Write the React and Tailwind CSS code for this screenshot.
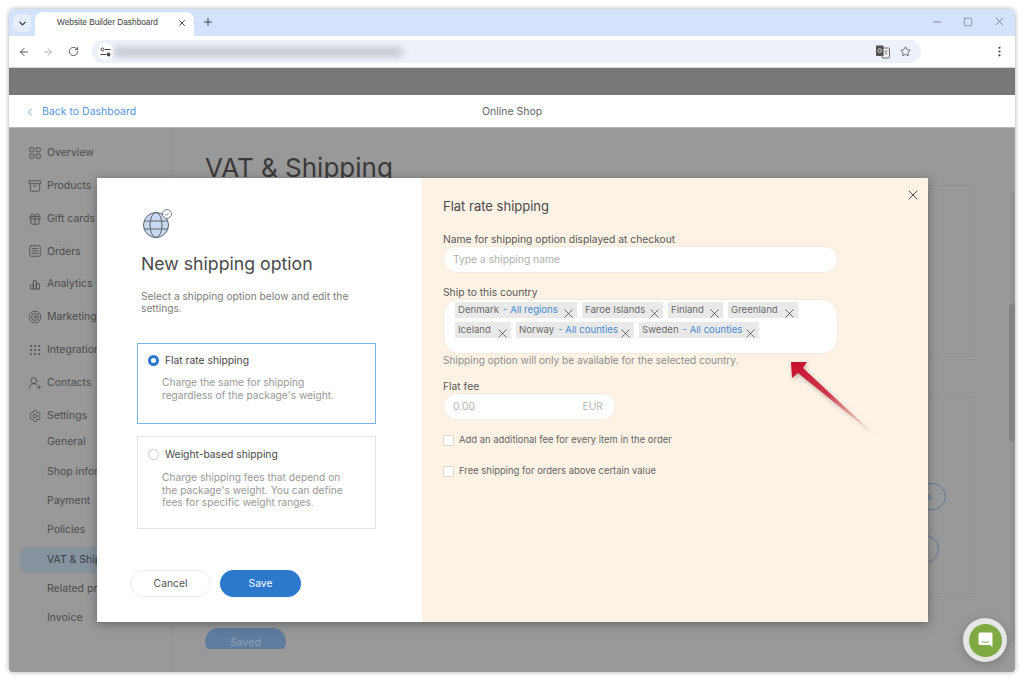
import React from "react";
import { ArrowLeft, ArrowRight, RotateCw, Star, MoreVertical, Minus, Square, SquareMenu, X, Plus, ChevronDown, ChevronLeft, LayoutGrid, Archive, Gift, Target, Grip, UserRoundPlus, Settings } from "lucide-react";

const font = { fontFamily: '"Inter", "Liberation Sans", sans-serif' };

function BarsIcon() {
  return (
    <svg width="13" height="13" viewBox="0 0 12 12" fill="none" stroke="#4a4a4a" strokeWidth="1">
      <path d="M.5 11.500V6.500h3.500v5M4 11.500V1.500h3.500v10M7.500 11.500V5h4v6.500M.5 11.500h11" />
    </svg>
  );
}

function TranslateIcon() {
  return (
    <svg width="14" height="14" viewBox="0 0 14 14">
      <rect x="6" y="3" width="7.500" height="10" rx="1" fill="#f2f2f2" stroke="#6a6a6a" strokeWidth="1" />
      <path d="M8.500 6h3M10 6c0 2-1 3-1.700 3.500M9.500 7.500c.5 1 1.200 1.700 2 2" stroke="#6a6a6a" strokeWidth=".7" fill="none" />
      <path d="M1 .5h5.500a1 1 0 0 1 1 1V11H1a1 1 0 0 1-1-1V1.500a1 1 0 0 1 1-1z" fill="#4f4f4f" />
      <circle cx="3.800" cy="5.500" r="1.800" fill="none" stroke="#fff" strokeWidth=".8" />
    </svg>
  );
}

function SideItem({ Icon, children }) {
  return (
    <div className="flex h-[32.900px] items-center gap-[7px] pl-[21px] text-[10.500px] text-[#4c4c4c]">
      <span className="flex w-[10px] items-center justify-center">
        {Icon === "bars" ? <BarsIcon /> : <Icon size={14} strokeWidth={1.300} className="shrink-0 text-[#454545]" />}
      </span>
      <span className="whitespace-nowrap">{children}</span>
    </div>
  );
}

function SubItem({ active, children }) {
  return (
    <div className="flex h-[29.400px] items-center">
      <div className={`ml-[11px] flex h-[26px] w-[120px] items-center rounded-l-md pl-[27px] text-[10.500px] whitespace-nowrap ${active ? "bg-[#87929f] text-[#3b3f45]" : "text-[#4c4c4c]"}`}>
        {children}
      </div>
    </div>
  );
}

function Tag({ name, extra, w }) {
  return (
    <div className={`relative flex h-[16px] items-center bg-[#e9e9e9] pl-[3px] text-[9.600px] leading-none whitespace-nowrap text-[#6b6b6b] ${w}`}>
      <span>{name}</span>
      {extra && <span className="ml-[4px] text-[#4a8bd4]">{extra}</span>}
      <X size={15} strokeWidth={1.100} className="absolute top-[4px] right-[1px] text-[#333333]" />
    </div>
  );
}

function Check({ children }) {
  return (
    <label className="flex items-center gap-[5px] text-[9.450px] text-[#666666]">
      <span className="h-[11px] w-[11px] border border-[#dfdcd6] bg-white" />
      {children}
    </label>
  );
}

function Globe() {
  return (
    <svg width="32" height="30" viewBox="0 0 32 30" fill="none">
      <circle cx="15" cy="17" r="12.500" fill="#c9daf0" stroke="#5c6470" strokeWidth="1" />
      <ellipse cx="15" cy="17" rx="6" ry="12.500" stroke="#5c6470" strokeWidth="1" />
      <path d="M3 13h24M3 21h24" stroke="#5c6470" strokeWidth="1" />
      <circle cx="26" cy="6" r="4.500" fill="#fff" stroke="#5c6470" strokeWidth=".8" />
      <path d="M24.200 6.200l1.300 1.200 2.300-2.600" stroke="#5c6470" strokeWidth=".8" />
    </svg>
  );
}

export default function App() {
  return (
    <div style={font} className="h-[681px] w-[1024px] overflow-hidden bg-white p-[9px]">
      <div className="flex h-[663px] w-[1006px] flex-col overflow-hidden rounded-t-md rounded-b-sm shadow-[0_0_5px_rgba(0,0,0,0.35)]">
        {/* tab strip */}
        <div className="flex h-[27px] shrink-0 items-end bg-[#d3e3fd] pl-[4px] text-[#333333]">
          <div className="mb-[4px] flex h-[18px] w-[18px] items-center justify-center rounded-md bg-[#e6eefc]">
            <ChevronDown size={11} strokeWidth={2.500} />
          </div>
          <div className="ml-[4px] flex h-[24px] w-[159px] items-center rounded-t-lg bg-white pr-[7px] pb-[3px] pl-[22px] text-[8.300px] text-[#3c3c3c]">
            <span className="flex-1 whitespace-nowrap" style={{ fontFamily: '"Liberation Sans", sans-serif' }}>Website Builder Dashboard</span>
            <X size={10} strokeWidth={2.200} />
          </div>
          <div className="mb-[8px] ml-[8px] flex h-[12px] items-center">
            <Plus size={12} strokeWidth={1.800} />
          </div>
          <div className="flex-1" />
          <div className="mb-[8px] flex items-center gap-[20px] pr-[9px] text-[#4b4f55]">
            <Minus size={12} strokeWidth={1.200} />
            <Square size={10} strokeWidth={1.200} />
            <X size={13} strokeWidth={1.200} />
          </div>
        </div>
        {/* toolbar */}
        <div className="flex h-[32px] shrink-0 items-center border-b border-[#d8d8d8] bg-white pl-[9px] text-[#3f4247]">
          <ArrowLeft size={12} strokeWidth={1.800} />
          <ArrowRight size={12} strokeWidth={1.800} className="ml-[12px] text-[#a6a8ab]" />
          <RotateCw size={11} strokeWidth={1.800} className="ml-[14px]" />
          <div className="relative ml-[13px] flex h-[23px] w-[829px] items-center rounded-full bg-[#edf2fa] pl-[5px]">
            <div className="flex h-[17px] w-[17px] items-center justify-center rounded-full bg-white">
              <svg width="11" height="10" viewBox="0 0 11 10" fill="none" stroke="#3f4247" strokeWidth="1">
                <circle cx="2.500" cy="2.500" r="1.500" /><path d="M5 2.500h5.500M.5 7.500H6" /><circle cx="8.500" cy="7.500" r="1.500" fill="#3f4247" />
              </svg>
            </div>
            <div className="-ml-[1px] h-[10px] w-[290px] rounded-full bg-[#c6c9d1] blur-[3px]" />
            <div className="flex-1" />
            <TranslateIcon />
            <Star size={11} strokeWidth={1.600} className="mr-[10px] ml-[10px]" />
          </div>
          <div className="flex-1" />
          <MoreVertical size={13} strokeWidth={2} className="mr-[9px]" />
        </div>
        {/* dimmed band */}
        <div className="h-[27px] shrink-0 bg-[#787878]" />
        {/* page header */}
        <div className="relative flex h-[33px] shrink-0 items-center border-b border-[#b5b5b5] bg-white pt-[2px] pl-[15px] text-[10.500px]">
          <ChevronLeft size={12} strokeWidth={1.800} className="text-[#5b97dc]" />
          <span className="ml-[6px] text-[#5b97dc]">Back to Dashboard</span>
          <span className="absolute left-[473px] text-[#666666]">Online Shop</span>
        </div>
        {/* content */}
        <div className="relative flex min-h-0 flex-1 bg-[#999999]">
          <div className="w-[163px] shrink-0 border-r border-[#8f8f8f] pt-[8.300px]">
            <SideItem Icon={LayoutGrid}>Overview</SideItem>
            <SideItem Icon={Archive}>Products</SideItem>
            <SideItem Icon={Gift}>Gift cards</SideItem>
            <SideItem Icon={SquareMenu}>Orders</SideItem>
            <SideItem Icon="bars">Analytics</SideItem>
            <SideItem Icon={Target}>Marketing</SideItem>
            <SideItem Icon={Grip}>Integrations</SideItem>
            <SideItem Icon={UserRoundPlus}>Contacts</SideItem>
            <SideItem Icon={Settings}>Settings</SideItem>
            <div className="-mt-[5px]">
              <SubItem>General</SubItem>
              <SubItem>Shop information</SubItem>
              <SubItem>Payment</SubItem>
              <SubItem>Policies</SubItem>
              <SubItem active>VAT &amp; Shipping</SubItem>
              <SubItem>Related products</SubItem>
              <SubItem>Invoice</SubItem>
            </div>
          </div>
          <div className="flex h-[521px] flex-1 flex-col overflow-hidden pl-[33px]">
            <h1 className="mt-[25px] text-[26px] leading-[30px] whitespace-nowrap text-[#3a3a3a]">VAT &amp; Shipping</h1>
            <div className="mt-[2px] h-[175px] w-[771px] shrink-0 border border-[#949494]" />
            <div className="relative mt-[37px] h-[200px] w-[771px] shrink-0 border border-[#949494]">
              <div className="absolute top-[85px] right-[29px] flex h-[27px] w-[80px] items-center justify-end rounded-full border border-[#59799f] pr-[13px] text-[10px] text-[#59799f]">s</div>
              <div className="absolute top-[137px] right-[36px] h-[28px] w-[80px] rounded-full border border-[#59799f]" />
            </div>
            <div className="mt-[31px] flex h-[27px] w-[81px] shrink-0 items-start justify-center rounded-[14px] bg-[#5f7c9f] pt-[7px] text-[10.500px] text-[#8fa3bb]">Saved</div>
          </div>
          {/* scrollbar */}
          <div className="absolute top-[64px] right-0 bottom-[30px] w-[5px] bg-[#939393]" />
          <div className="absolute top-[175px] right-0 h-[139px] w-[6px] rounded-l-sm bg-[#858585]" />

          {/* modal */}
          <div className="absolute top-[50px] left-[88px] flex h-[444px] w-[831px] shadow-[0_2px_10px_rgba(0,0,0,0.35)]">
            <div className="flex w-[325px] shrink-0 flex-col bg-white pt-[30px] pl-[40px]">
              <div className="ml-[4px]"><Globe /></div>
              <h2 className="mt-[14px] ml-[4px] text-[17.700px] leading-[24px] whitespace-nowrap text-[#4a4a4a]">New shipping option</h2>
              <p className="mt-[14px] ml-[4px] w-[225px] text-[10.200px] leading-[12px] text-[#7d7d7d]">Select a shipping option below and edit the settings.</p>
              <div className="mt-[29px] h-[81px] w-[239px] border border-[#7fb3ea] pt-[9px] pl-[10px]">
                <div className="flex items-center gap-[6px] text-[10.300px] text-[#4a4a4a]">
                  <span className="h-[11px] w-[11px] rounded-full border-[3px] border-[#2b78cc] bg-white" />
                  Flat rate shipping
                </div>
                <p className="mt-[8px] ml-[14px] w-[180px] text-[10.200px] leading-[12.200px] text-[#999999]">Charge the same for shipping regardless of the package's weight.</p>
              </div>
              <div className="mt-[12px] h-[93px] w-[239px] border border-[#e3e3e3] pt-[10px] pl-[10px]">
                <div className="flex items-center gap-[6px] text-[10.300px] text-[#4a4a4a]">
                  <span className="h-[11px] w-[11px] rounded-full border border-[#c9c9c9] bg-white" />
                  Weight-based shipping
                </div>
                <p className="mt-[9px] ml-[14px] w-[190px] text-[10.200px] leading-[12.200px] text-[#999999]">Charge shipping fees that depend on the package's weight. You can define fees for specific weight ranges.</p>
              </div>
              <div className="mt-[41px] -ml-[7px] flex gap-[9px] text-[10.300px]">
                <button className="h-[27px] w-[81px] rounded-full border border-[#ececec] bg-white text-[#555555]">Cancel</button>
                <button className="h-[27px] w-[81px] rounded-full bg-[#2b78cc] text-white">Save</button>
              </div>
            </div>
            <div className="relative flex-1 bg-[#fdf2e4] pt-[20px] pl-[21px]">
              <X size={16} strokeWidth={1.300} className="absolute top-[9px] right-[7px] text-[#333333]" />
              <div className="text-[13px] leading-[16px] text-[#4a4a4a]">Flat rate shipping</div>
              <div className="mt-[19px] text-[10.300px] leading-[13px] text-[#5a5a5a]">Name for shipping option displayed at checkout</div>
              <div className="flex h-[27px] w-[395px] items-center rounded-full border border-[#f2ebe1] bg-white pl-[9px] text-[10.300px] text-[#b0b0b0]">Type a shipping name</div>
              <div className="mt-[13px] text-[10.300px] leading-[13px] text-[#5a5a5a]">Ship to this country</div>
              <div className="h-[55px] w-[395px] rounded-[16px] border border-[#f2ebe1] bg-white px-[11px] pt-[2px]">
                <div className="flex flex-wrap gap-x-[5px] gap-y-[4px]">
                  <Tag name="Denmark" extra="- All regions" w="w-[122px]" />
                  <Tag name="Faroe Islands" w="w-[81px]" />
                  <Tag name="Finland" w="w-[55px]" />
                  <Tag name="Greenland" w="w-[70px]" />
                  <Tag name="Iceland" w="w-[56px]" />
                  <Tag name="Norway" extra="- All counties" w="w-[118px]" />
                  <Tag name="Sweden" extra="- All counties" w="w-[120px]" />
                </div>
              </div>
              <div className="text-[10.100px] leading-[13px] text-[#8f8f8f]">Shipping option will only be available for the selected country.</div>
              <div className="mt-[12px] text-[10.300px] leading-[14px] text-[#5a5a5a]">Flat fee</div>
              <div className="flex h-[27px] w-[173px] items-center justify-between rounded-full border border-[#f2ebe1] bg-white pr-[12px] pl-[9px] text-[10.300px] text-[#b5b5b5]">
                <span>0.00</span><span>EUR</span>
              </div>
              <div className="mt-[13px]"><Check>Add an additional fee for every item in the order</Check></div>
              <div className="mt-[17px]"><Check>Free shipping for orders above certain value</Check></div>
            </div>
          </div>

          {/* annotation arrow */}
          <svg className="absolute top-[232px] left-[769px] drop-shadow-[1px_2px_2px_rgba(0,0,0,0.25)]" width="110" height="90" viewBox="0 0 110 90">
            <defs>
              <linearGradient id="arrowFade" x1="0" y1="0" x2="1" y2="1">
                <stop offset="0" stopColor="#c70f2b" />
                <stop offset="0.45" stopColor="#cf3a50" />
                <stop offset="1" stopColor="#e9a9a4" stopOpacity="0.15" />
              </linearGradient>
            </defs>
            <path d="M13 2L29 2L25 8L98 76L20 13L14 18Z" fill="url(#arrowFade)" />
          </svg>

          {/* chat bubble */}
          <div className="absolute right-[8px] bottom-[10px] flex h-[44px] w-[44px] items-center justify-center rounded-full bg-[#e6e6e6] shadow-[0_2px_8px_rgba(0,0,0,0.2)]">
            <div className="flex h-[33px] w-[33px] items-center justify-center rounded-full bg-[#7fa942]">
              <svg width="15" height="16" viewBox="0 0 15 16">
                <path d="M2 .5h11a1.500 1.500 0 0 1 1.500 1.500v13l-3-2H2A1.500 1.500 0 0 1 .5 11.500V2A1.500 1.500 0 0 1 2 .5z" fill="#fff" />
                <path d="M4 9.500c2 1.200 5 1.200 7 0" stroke="#7fa942" strokeWidth="1" fill="none" />
              </svg>
            </div>
          </div>
        </div>
      </div>
    </div>
  );
}
